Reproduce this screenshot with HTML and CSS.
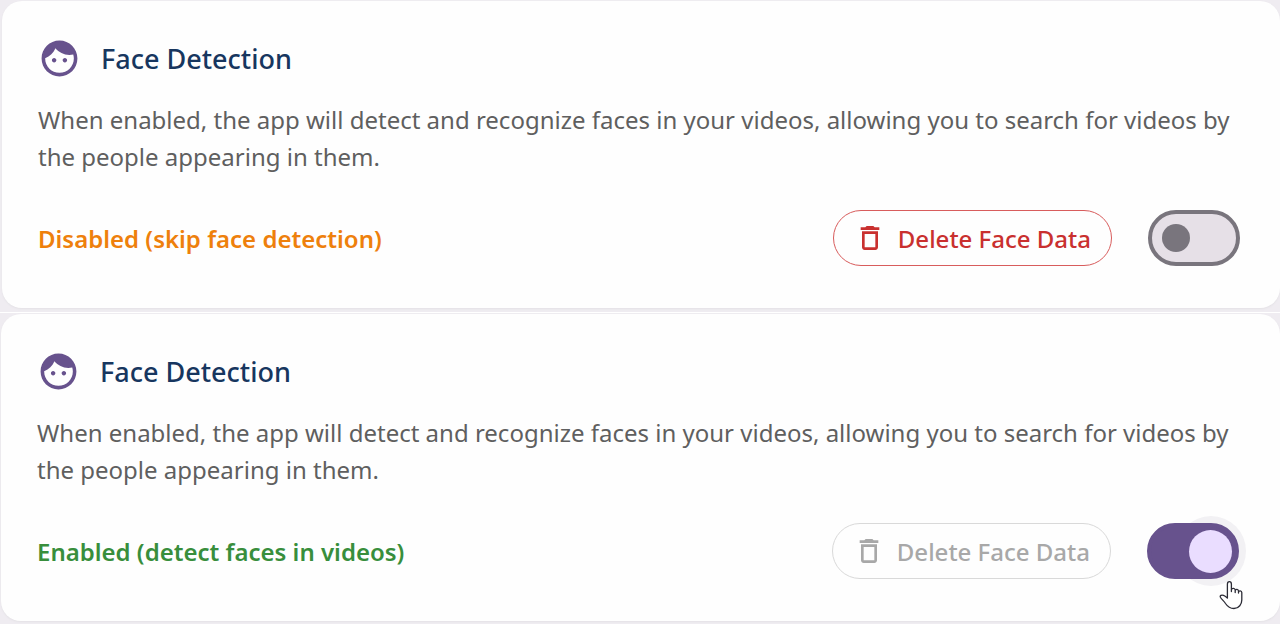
FILE: index.html
```html
<!DOCTYPE html>
<html lang="en">
<head>
<meta charset="utf-8">
<meta name="viewport" content="width=device-width, initial-scale=1">
<title>Face Detection</title>
<link rel="stylesheet" href="styles.css">
</head>
<body>
<svg class="sprite" aria-hidden="true">
  <symbol id="face" viewBox="0 0 24 24"><path d="M10.25 13c0 .69-.56 1.25-1.25 1.25S7.75 13.69 7.75 13s.56-1.25 1.25-1.25 1.25.56 1.25 1.25zM15 11.75c-.69 0-1.25.56-1.25 1.25s.56 1.25 1.25 1.25 1.25-.56 1.25-1.25-.56-1.25-1.25-1.25zm7 .25c0 5.52-4.48 10-10 10S2 17.52 2 12 6.48 2 12 2s10 4.48 10 10zm-2 0c0-.78-.12-1.53-.33-2.24-.7.15-1.42.24-2.17.24-3.13 0-5.92-1.44-7.76-3.69C8.69 8.87 6.6 10.88 4 11.86c.01.04 0 .09 0 .14 0 4.41 3.59 8 8 8s8-3.59 8-8z"/></symbol>
  <symbol id="trash" viewBox="0 0 24 24"><path d="M6 19c0 1.1.9 2 2 2h8c1.1 0 2-.9 2-2V7H6v12zM8 9h8v10H8V9zm7.5-5l-1-1h-5l-1 1H5v2h14V4z"/></symbol>
</svg>
<main class="page">
  <section class="panel panel-off">
    <div class="card">
      <header class="heading">
        <svg class="face-icon" aria-hidden="true"><use href="#face"/></svg>
        <h2 class="title">Face Detection</h2>
      </header>
      <p class="description">When enabled, the app will detect and recognize faces in your videos, allowing you to search for videos by the people appearing in them.</p>
      <div class="controls">
        <label class="status status-off" for="detect-off">Disabled (skip face detection)</label>
        <button class="delete" type="button"><svg class="trash-icon" aria-hidden="true"><use href="#trash"/></svg>Delete Face Data</button>
        <span class="switch"><input class="toggle" id="detect-off" type="checkbox" role="switch"></span>
      </div>
    </div>
  </section>
  <section class="panel panel-on">
    <div class="card">
      <header class="heading">
        <svg class="face-icon" aria-hidden="true"><use href="#face"/></svg>
        <h2 class="title">Face Detection</h2>
      </header>
      <p class="description">When enabled, the app will detect and recognize faces in your videos, allowing you to search for videos by the people appearing in them.</p>
      <div class="controls">
        <label class="status status-on" for="detect-on">Enabled (detect faces in videos)</label>
        <button class="delete" type="button" disabled><svg class="trash-icon" aria-hidden="true"><use href="#trash"/></svg>Delete Face Data</button>
        <span class="switch switch-hover"><input class="toggle" id="detect-on" type="checkbox" role="switch" checked>
          <svg class="pointer" viewBox="0 0 24 30" aria-hidden="true"><path d="M8.400 18V4.200C8.400 .8 12.400 .8 12.400 4.200V11.500V9.600C13 7.700 16 8 16.200 10V12.500V10.500C16.800 8.800 19.300 9.200 19.500 11V13V12C20 10.300 22.600 10.600 22.800 12.500V20C22.800 24 20 28.500 15 28.500C11 28.500 8.500 26.500 6.500 23.500C5 21 2.500 19.200 1.400 17.200C.6 15.300 2.600 14.700 4.500 15.300C6 15.800 7.300 17 8.400 18Z"/></svg>
        </span>
      </div>
    </div>
  </section>
</main>
</body>
</html>
```
FILE: styles.css
```css
* { box-sizing: border-box; }

body {
  margin: 0;
  background: #efecf1;
  color: #5f5f5f;
  font-family: "Segoe UI", "Noto Sans", sans-serif;
}

.sprite { display: none; }

.panel { background: #efecf1; }
.panel-off { padding: 1px 0 4px 2px; }
.panel-on { padding: 1px 0 2px 1px; border-top: 1px solid #fff; }

.card {
  padding: 36px 40px 42px 36px;
  border-radius: 20px;
  background: #fefefe;
  box-shadow: 0 1px 2px #e4e2e6;
}
.panel-on .card { padding-right: 41px; }

.heading {
  display: flex;
  align-items: center;
  gap: 20px;
}

.face-icon {
  width: 43px;
  height: 43px;
  fill: #67528d;
}

.title {
  margin: 0;
  padding-top: 1px;
  color: #17365f;
  font-size: 27px;
  font-weight: 500;
  line-height: 42px;
}

.description {
  margin: 21px 0 35px;
  font-size: 24px;
  line-height: 37px;
}

.controls {
  display: flex;
  align-items: center;
  gap: 36px;
}

.status {
  flex: 1;
  padding-top: 2px;
  font-size: 24px;
  font-weight: 600;
  line-height: 32px;
}
.status-off { color: #ee800c; }
.status-on { color: #388e3c; }

.delete {
  display: flex;
  align-items: center;
  gap: 12px;
  height: 56px;
  padding: 0 20px;
  border: 1px solid #d85c5c;
  border-radius: 28px;
  background: transparent;
  color: #c9302f;
  font-family: inherit;
  font-size: 24px;
  font-weight: 500;
}
.delete:disabled { border-color: #d9d9d9; color: #a8a8a8; }

.trash-icon {
  width: 32px;
  height: 32px;
  fill: currentColor;
}

.switch {
  position: relative;
  z-index: 0;
  display: flex;
}
.switch-hover::before {
  content: "";
  position: absolute;
  z-index: -1;
  top: -7px;
  right: -7px;
  width: 70px;
  height: 70px;
  border-radius: 50%;
  background: #f2f1f4;
}

.toggle {
  appearance: none;
  display: flex;
  align-items: center;
  width: 92px;
  height: 56px;
  margin: 0;
  padding: 0 10px;
  border: 4px solid #79757d;
  border-radius: 28px;
  background: #e6e0e7;
}
.toggle::before {
  content: "";
  width: 28px;
  height: 28px;
  border-radius: 50%;
  background: #79757d;
}
.toggle:checked {
  justify-content: flex-end;
  padding: 0 3px;
  border-color: #67528d;
  background: #67528d;
}
.toggle:checked::before {
  width: 43px;
  height: 43px;
  background: #eaddff;
}

.pointer {
  position: absolute;
  top: 57px;
  right: -4px;
  width: 24px;
  height: 30px;
  fill: #fff;
  stroke: #2b2b35;
  stroke-width: 1.3;
  stroke-linejoin: round;
}
```
